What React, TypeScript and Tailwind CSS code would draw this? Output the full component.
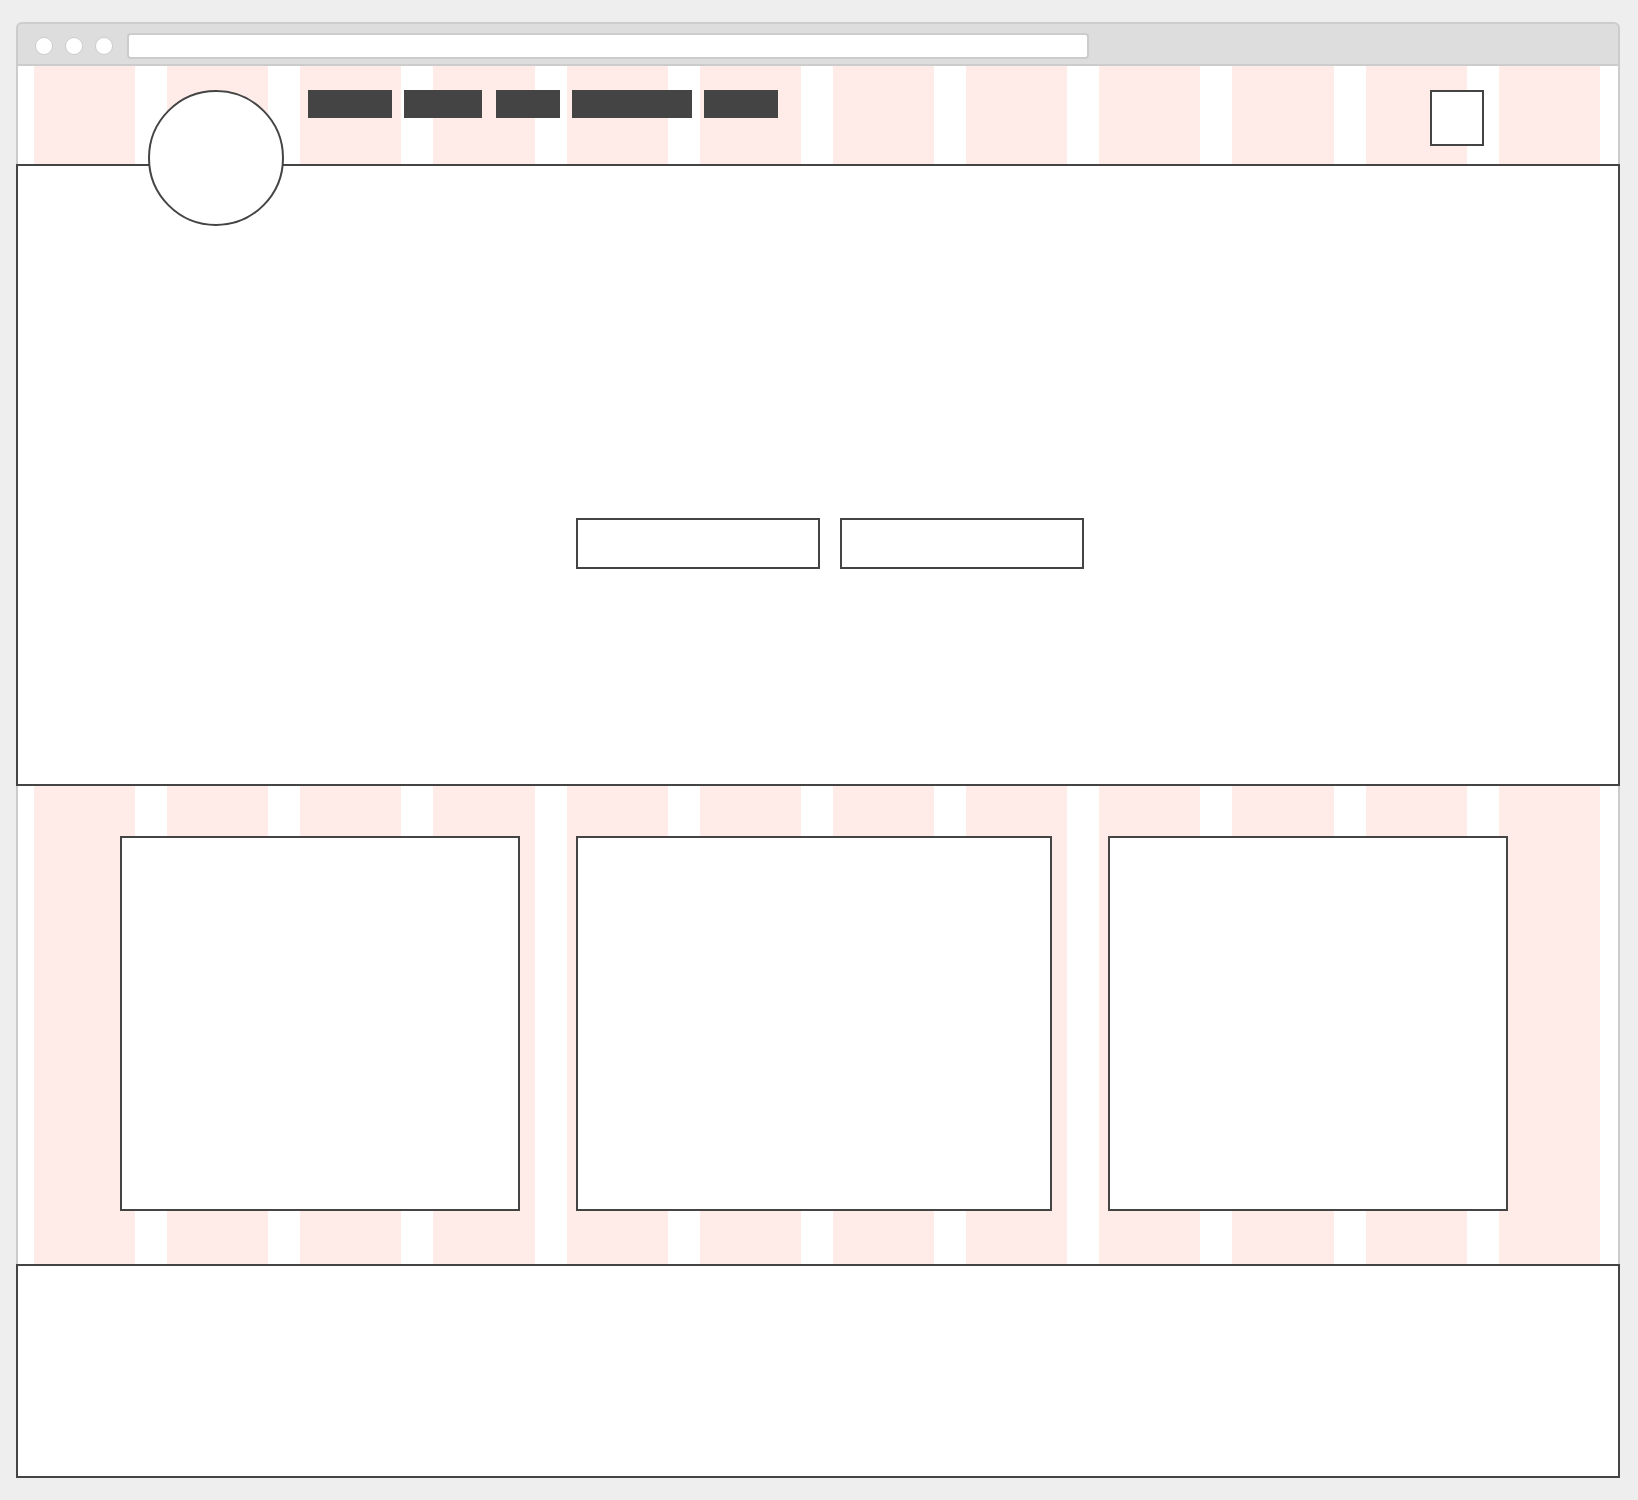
import React from "react";

export default function App() {
  const cols = Array.from({ length: 12 });
  return (
    <div className="min-h-[1500px] w-[1638px] bg-[#eeeeee] pt-[22px] pl-[16px]" style={{ fontFamily: '"Liberation Sans", sans-serif' }}>
      <div className="w-[1604px]">
        {/* title bar */}
        <div className="flex h-[44px] items-start rounded-t-[6px] border-2 border-[#cccccc] bg-[#dddddd] pl-[17px]">
          <div className="mt-[13px] flex gap-[12px]">
            <span className="block h-[18px] w-[18px] rounded-full border-[1.5px] border-[#cccccc] bg-white" />
            <span className="block h-[18px] w-[18px] rounded-full border-[1.5px] border-[#cccccc] bg-white" />
            <span className="block h-[18px] w-[18px] rounded-full border-[1.5px] border-[#cccccc] bg-white" />
          </div>
          <div className="ml-[14px] mt-[9px] h-[26px] w-[962px] rounded-[4px] border-2 border-[#cccccc] bg-white" />
        </div>

        {/* content */}
        <div className="relative bg-white">
          <div className="absolute inset-0 grid grid-cols-12 gap-x-[32px] pl-[18px] pr-[20px]">
            {cols.map((_, i) => (
              <div key={i} className="bg-[#ffebe8]" />
            ))}
          </div>

          {/* header */}
          <div className="relative z-10 flex h-[98px] items-start border-x-2 border-[#cccccc] pl-[130px] pr-[134px] pt-[24px]">
            <div className="h-[136px] w-[136px] shrink-0 rounded-full border-2 border-[#444444] bg-white" />
            <nav className="ml-[24px] flex">
              <span className="block h-[28px] w-[84px] bg-[#444444]" />
              <span className="ml-[12px] block h-[28px] w-[78px] bg-[#444444]" />
              <span className="ml-[14px] block h-[28px] w-[64px] bg-[#444444]" />
              <span className="ml-[12px] block h-[28px] w-[120px] bg-[#444444]" />
              <span className="ml-[12px] block h-[28px] w-[74px] bg-[#444444]" />
            </nav>
            <div className="ml-auto h-[56px] w-[54px] border-2 border-[#444444] bg-white" />
          </div>

          {/* hero */}
          <div className="relative h-[622px] border-2 border-[#444444] bg-white pl-[558px] pt-[352px]">
            <div className="flex gap-[20px]">
              <button className="h-[51px] w-[244px] border-2 border-[#444444] bg-white" />
              <button className="h-[51px] w-[244px] border-2 border-[#444444] bg-white" />
            </div>
          </div>

          {/* cards section */}
          <div className="relative flex h-[478px] items-start gap-[56px] border-x-2 border-[#cccccc] pl-[102px] pt-[50px]">
            <div className="h-[375px] w-[400px] border-2 border-[#444444] bg-white" />
            <div className="h-[375px] w-[476px] border-2 border-[#444444] bg-white" />
            <div className="h-[375px] w-[400px] border-2 border-[#444444] bg-white" />
          </div>

          {/* footer */}
          <div className="relative h-[214px] border-2 border-[#444444] bg-white" />
        </div>
      </div>
    </div>
  );
}
